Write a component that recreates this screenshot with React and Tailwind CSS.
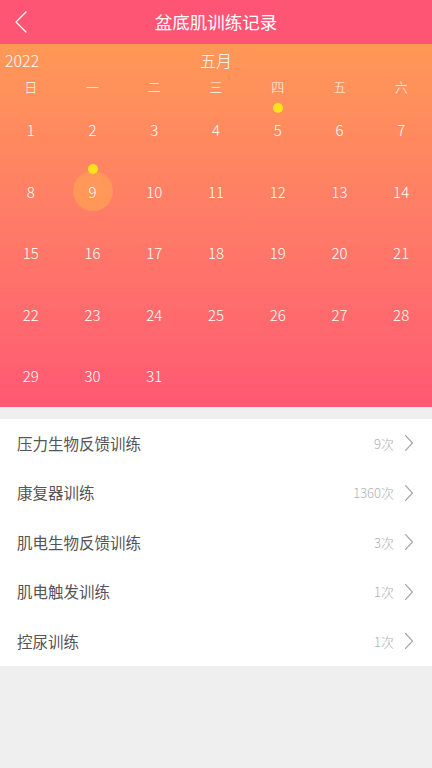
import React from "react";

const font = { fontFamily: '"Noto Sans CJK SC", "Noto Sans", sans-serif' };

const weekdays = ["日", "一", "二", "三", "四", "五", "六"];
const items = [
  ["压力生物反馈训练", "9次"],
  ["康复器训练", "1360次"],
  ["肌电生物反馈训练", "3次"],
  ["肌电触发训练", "1次"],
  ["控尿训练", "1次"],
];

function Chevron({ className }) {
  return (
    <svg width="10" height="18" viewBox="0 0 10 18" className={className} fill="none">
      <path d="M1.5 1.5 L8.5 9 L1.5 16.5" stroke="currentColor" strokeWidth="1.1" strokeLinecap="round" strokeLinejoin="round" />
    </svg>
  );
}

export default function App() {
  const days = [];
  for (let i = 1; i <= 31; i++) days.push(i);
  return (
    <div className="w-[432px] h-[768px] bg-[#efefef] flex flex-col" style={font}>
      <div className="h-[44px] bg-[#ff5575] flex items-center relative">
        <svg width="14" height="22" viewBox="0 0 14 22" fill="none" className="absolute left-[14px] top-[11px]">
          <path d="M12 1 L2 11 L12 21" stroke="white" strokeWidth="1.3" strokeLinecap="round" strokeLinejoin="round" />
        </svg>
        <div className="flex-1 text-center text-white text-[17.5px] leading-none">盆底肌训练记录</div>
      </div>
      <div className="bg-gradient-to-b from-[#ff9856] to-[#ff5873] text-white font-light">
        <div className="h-[31px] relative flex items-center justify-center">
          <span className="absolute left-[5px] text-[16px] leading-none">2022</span>
          <span className="text-[16px] leading-none">五月</span>
        </div>
        <div className="h-[24px] grid grid-cols-7 items-center">
          {weekdays.map((w) => (
            <div key={w} className="text-center text-[13px] leading-none text-white/90 -mt-[2px]">{w}</div>
          ))}
        </div>
        <div className="grid grid-cols-7 auto-rows-[61.5px]">
          {days.map((d) => (
            <div key={d} className="relative flex items-center justify-center">
              {d === 9 && (
                <div className="absolute w-[40px] h-[40px] rounded-full bg-[#ff9a58]/90" />
              )}
              {(d === 5 || d === 9) && (
                <div className="absolute left-1/2 top-1/2 -translate-x-1/2 -translate-y-[27px] w-[10px] h-[10px] rounded-full bg-[#ffe21c]" />
              )}
              <span className="relative text-[15px] leading-none">{d}</span>
            </div>
          ))}
        </div>
      </div>
      <div className="mt-[12px] bg-white">
        {items.map(([name, count]) => (
          <div key={name} className="h-[49.5px] flex items-center pl-[17px] pr-[18px]">
            <span className="flex-1 text-[15.5px] text-[#555555] leading-none">{name}</span>
            <span className="text-[13px] text-[#b0b0b0] leading-none mr-[10px] font-light">{count}</span>
            <Chevron className="text-[#a8a8a8]" />
          </div>
        ))}
      </div>
    </div>
  );
}
